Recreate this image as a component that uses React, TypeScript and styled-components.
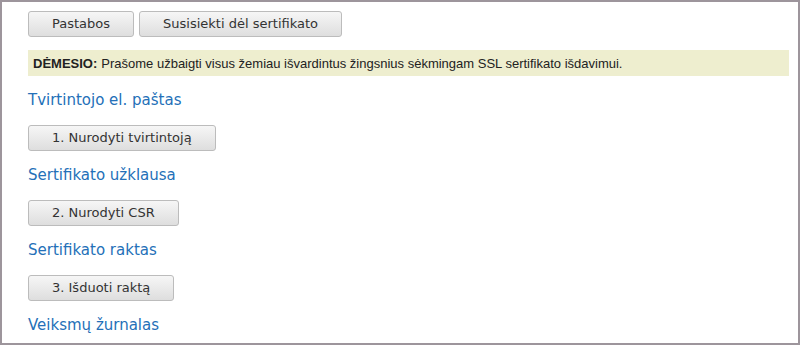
import React from "react";
import styled, { createGlobalStyle } from "styled-components";

const GlobalStyle = createGlobalStyle`
  html, body {
    margin: 0;
    padding: 0;
    background: #ffffff;
  }
  * {
    box-sizing: border-box;
  }
`;

const Frame = styled.div`
  width: 800px;
  height: 345px;
  border: 2px solid #9d959c;
  background: #ffffff;
  padding: 9px 9px 0 26px;
  overflow: hidden;
  font-family: "DejaVu Sans", Verdana, sans-serif;
`;

const Toolbar = styled.div`
  display: flex;
  gap: 5px;
`;

const Button = styled.button`
  height: 26px;
  padding: 0 23px;
  border: 1px solid #bcbcbc;
  border-radius: 3px;
  background: linear-gradient(#f6f6f6, #dedede);
  color: #333333;
  font-family: "DejaVu Sans", Verdana, sans-serif;
  font-size: 13px;
  line-height: 24px;
  cursor: pointer;
`;

const Notice = styled.div`
  margin: 13px 0 14px;
  height: 26px;
  padding: 0 5px;
  display: flex;
  align-items: center;
  background: #eeeecf;
  color: #222222;
  font-family: "Liberation Sans", Arial, sans-serif;
  font-size: 13px;

  strong {
    font-weight: bold;
    margin-right: 4px;
  }
`;

const Section = styled.section`
  display: flex;
  flex-direction: column;
  align-items: flex-start;
`;

const Heading = styled.h3`
  margin: 0 0 15px;
  height: 20px;
  line-height: 20px;
  font-size: 15px;
  font-weight: normal;
  color: #2470b8;
`;

const StepButton = styled(Button)`
  margin-bottom: 14px;
`;

const steps = [
  { title: "Tvirtintojo el. paštas", action: "1. Nurodyti tvirtintoją" },
  { title: "Sertifikato užklausa", action: "2. Nurodyti CSR" },
  { title: "Sertifikato raktas", action: "3. Išduoti raktą" },
  { title: "Veiksmų žurnalas" },
];

const App: React.FC = () => {
  return (
    <>
      <GlobalStyle />
      <Frame>
        <Toolbar>
          <Button>Pastabos</Button>
          <Button>Susisiekti dėl sertifikato</Button>
        </Toolbar>
        <Notice>
          <strong>DĖMESIO:</strong>
          Prašome užbaigti visus žemiau išvardintus žingsnius sėkmingam SSL sertifikato išdavimui.
        </Notice>
        {steps.map((step) => (
          <Section key={step.title}>
            <Heading>{step.title}</Heading>
            {step.action && <StepButton>{step.action}</StepButton>}
          </Section>
        ))}
      </Frame>
    </>
  );
};

export default App;
